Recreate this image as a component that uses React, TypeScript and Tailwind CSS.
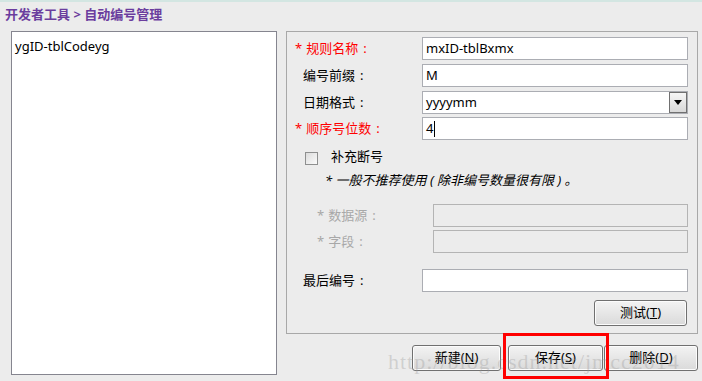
import React from 'react'

const FONT = '"Noto Sans", "Noto Sans CJK SC", sans-serif'

function Field({ value = '', disabled = false, w = 'w-[266px]' }: { value?: string; disabled?: boolean; w?: string }) {
  return (
    <div
      className={`${w} h-[23px] border border-[#abadb3] flex items-center px-[3px] text-[13px] text-black ${
        disabled ? 'bg-[#ececec] border-[#b4b4b4]' : 'bg-white'
      }`}
    >
      {value}
    </div>
  )
}

function Label({ text, star = false, gray = false, indent = 0 }: { text: string; star?: boolean; gray?: boolean; indent?: number }) {
  const color = gray ? 'text-[#a8a8a8]' : star ? 'text-[#ff0000]' : 'text-black'
  return (
    <div className={`text-[13px] leading-none ${color}`} style={{ paddingLeft: indent }}>
      {star && <span className="mr-[4px]">*</span>}
      {text}
      <span className="ml-[5px]">:</span>
    </div>
  )
}

function Btn({ label, mnemonic, w }: { label: string; mnemonic: string; w: string }) {
  return (
    <button
      className={`${w} h-[26px] border border-[#707070] rounded-[3px] bg-gradient-to-b from-[#f3f3f3] to-[#dadada] text-[13px] text-black flex items-center justify-center shadow-[inset_0_0_0_1px_#fcfcfc]`}
    >
      {label}(<span className="underline">{mnemonic}</span>)
    </button>
  )
}

export default function App() {
  return (
    <div
      className="relative w-[702px] h-[381px] bg-[#ececec] border-t-2 border-[#d3e6e2] overflow-hidden"
      style={{ fontFamily: FONT }}
    >
      {/* Title */}
      <div className="h-[29px] pl-[5px] pt-[3px] text-[13px] font-bold text-[#6b3d9e]">
        开发者工具 &gt; 自动编号管理
      </div>

      <div className="flex">
        {/* List */}
        <div className="ml-[11px] w-[266px] h-[344px] bg-white border border-[#85858f] pl-[3px] pt-[5px] text-[13px] text-black">
          ygID-tblCodeyg
        </div>

        {/* Right */}
        <div className="ml-[9px] w-[412px] flex flex-col">
          <div className="w-[412px] h-[303px] border border-[#a8a8a8] pl-[8px] pr-[8px] pt-[5px] flex flex-col">
            <div className="flex items-center h-[23px]">
              <div className="w-[127px]"><Label text="规则名称" star /></div>
              <Field value="mxID-tblBxmx" />
            </div>
            <div className="flex items-center h-[23px] mt-[4px]">
              <div className="w-[127px]"><Label text="编号前缀" indent={8} /></div>
              <Field value="M" />
            </div>
            <div className="flex items-center h-[23px] mt-[4px]">
              <div className="w-[127px]"><Label text="日期格式" indent={8} /></div>
              <div className="w-[266px] h-[23px] border border-[#abadb3] bg-white flex items-center">
                <div className="flex-1 px-[3px] text-[13px]">yyyymm</div>
                <div className="w-[18px] h-[21px] border border-[#707070] bg-gradient-to-b from-[#f6f6f6] to-[#d8d8d8] flex items-center justify-center">
                  <svg width="8" height="5" viewBox="0 0 8 5">
                    <path d="M0 0H8L4 5Z" fill="#000" />
                  </svg>
                </div>
              </div>
            </div>
            <div className="flex items-center h-[23px] mt-[3px]">
              <div className="w-[127px]"><Label text="顺序号位数" star /></div>
              <div className="w-[266px] h-[23px] border border-[#abadb3] bg-white flex items-center px-[3px] text-[13px]">
                4<span className="w-px h-[16px] bg-black ml-px" />
              </div>
            </div>

            <div className="flex items-center h-[16px] mt-[8px] pl-[10px]">
              <div className="w-[13px] h-[13px] border border-[#8e8f8f] bg-gradient-to-br from-[#dcdcdc] to-[#fbfbfb] mt-[4px]" />
              <div className="ml-[13px] text-[13px] text-black leading-none">补充断号</div>
            </div>

            <div className="h-[18px] mt-[8px] pl-[30px] flex items-center text-[13px] italic text-black whitespace-pre">
              * 一般不推荐使用 ( 除非编号数量很有限 ) 。
            </div>

            <div className="flex items-center h-[23px] mt-[14px]">
              <div className="w-[138px]"><Label text="数据源" star gray indent={22} /></div>
              <Field disabled w="w-[255px]" />
            </div>
            <div className="flex items-center h-[23px] mt-[3px]">
              <div className="w-[138px]"><Label text="字段" star gray indent={22} /></div>
              <Field disabled w="w-[255px]" />
            </div>

            <div className="flex items-center h-[23px] mt-[16px]">
              <div className="w-[127px]"><Label text="最后编号" indent={8} /></div>
              <Field />
            </div>

            <div className="flex justify-end mt-[8px] pr-[2px]">
              <Btn label="测试" mnemonic="T" w="w-[93px]" />
            </div>
          </div>

          <div className="flex mt-[11px]">
            <div className="ml-[126px]"><Btn label="新建" mnemonic="N" w="w-[89px]" /></div>
            <div className="ml-[7px]"><Btn label="保存" mnemonic="S" w="w-[95px]" /></div>
            <div className="ml-[1px]"><Btn label="删除" mnemonic="D" w="w-[94px]" /></div>
          </div>
        </div>
      </div>

      {/* watermark */}
      <div
        className="absolute left-[388px] top-[343px] pointer-events-none text-[22px] tracking-[1px] text-[#9a9a9a]/35 whitespace-nowrap"
        style={{ fontFamily: '"Liberation Serif", serif' }}
      >
        http://blog.csdn.net/jmcc2014
      </div>

      {/* annotation box */}
      <div className="absolute left-[503px] top-[331px] w-[106px] h-[46px] border-[3px] border-[#ff0000] pointer-events-none" />
    </div>
  )
}
